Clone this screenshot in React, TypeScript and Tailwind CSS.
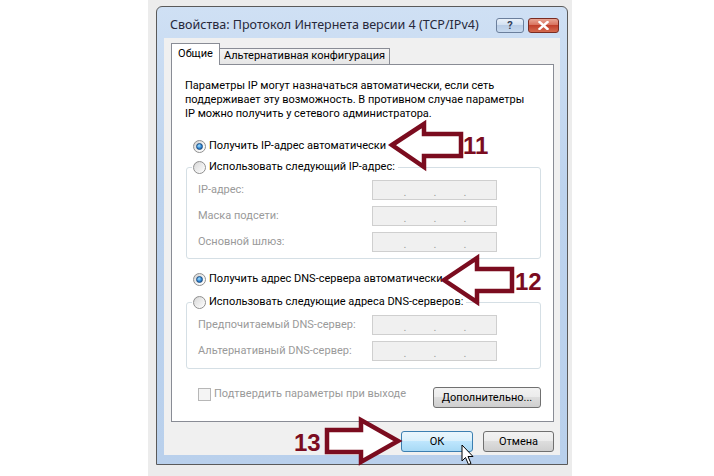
import React from 'react';

const FONT = "font-['Roboto','Noto_Sans',sans-serif]";

function Radio({ checked }: { checked?: boolean }) {
  return (
    <span className="inline-flex w-[13px] h-[13px] shrink-0 items-center justify-center rounded-full border border-[#8f8f8f] bg-[linear-gradient(135deg,#cfcfcf,#f6f6f6_60%,#ffffff)]">
      {checked ? (
        <span className="w-[7px] h-[7px] rounded-full border border-[#1b4c80] bg-[radial-gradient(circle_at_40%_35%,#a8e4ff,#2f86d6_55%,#17508f)]" />
      ) : (
        <span className="w-[9px] h-[9px] rounded-full bg-[linear-gradient(135deg,#dcdcdc,#fafafa)]" />
      )}
    </span>
  );
}

function IpBox() {
  return (
    <div className="w-[125px] h-[20px] shrink-0 border border-[#cfcfcf] bg-[#f0f0f0] flex items-center pl-[30px] gap-[26px] text-[11px] text-[#9a9a9a] leading-none pt-[5px]">
      <span className="w-[4px] text-center">.</span>
      <span className="w-[4px] text-center">.</span>
      <span className="w-[4px] text-center">.</span>
    </div>
  );
}

function Field({ label }: { label: string }) {
  return (
    <div className="flex items-center h-[20px]">
      <span className="w-[174px] shrink-0 whitespace-nowrap text-[#9a9a9a]">{label}</span>
      <IpBox />
    </div>
  );
}

const btn = 'h-[21px] rounded-[3px] border text-black leading-none whitespace-nowrap';
const greyBtn = 'border-[#707070] bg-[linear-gradient(#f2f2f2,#ebebeb_49%,#dddddd_50%,#cfcfcf)]';
const blueBtn = 'border-[#3c7fb1] bg-[linear-gradient(#eaf6fd,#d9f0fc_49%,#bee6fd_50%,#a7d9f5)]';

export default function App() {
  return (
    <div className={`relative w-[714px] h-[476px] bg-white overflow-hidden text-[11px] ${FONT}`}>
      <div className="ml-[148px] w-[424px] h-[476px] bg-[#ececec] pt-[6px] pl-[8px]">
        {/* window */}
        <div className="w-[412px] h-[459px] border border-[#5a5a5a] rounded-t-[6px] bg-[linear-gradient(#cfe0f4,#bdd3ee_40%,#b9d0ec)] flex flex-col">
          {/* title bar */}
          <div className="h-[31px] pl-[13px] pr-[8px] pt-[5px] flex items-center justify-between">
            <span className="font-['Noto_Sans',sans-serif] text-[12.5px] text-[#27283a] leading-[16px] whitespace-nowrap">Свойства: Протокол Интернета версии 4 (TCP/IPv4)</span>
            <div className="flex gap-[4px]">
              <div className="w-[28px] h-[15px] rounded-[3px] border border-[#6b7f9c] bg-[linear-gradient(#e9f1fa,#d3e1f2_45%,#b9cde6_50%,#c8daef)] flex items-center justify-center text-[11px] font-bold text-[#33415a] leading-none">?</div>
              <div className="w-[31px] h-[15px] rounded-[3px] border border-[#7a2c22] bg-[linear-gradient(#e9a594,#d9735f_45%,#c2402c_50%,#d46a4f)] flex items-center justify-center">
                <svg width="11" height="9" viewBox="0 0 11 9">
                  <path d="M1.5 1 L9.5 8 M9.5 1 L1.5 8" stroke="#ffffff" strokeWidth="2.4" strokeLinecap="square" />
                </svg>
              </div>
            </div>
          </div>

          {/* client area */}
          <div className="mx-[7px] h-[417px] bg-[#f0f0f0] pl-[7px] pt-[5px] text-black">
            {/* tabs */}
            <div className="flex items-start h-[21px]">
              <div className="relative z-10 w-[49px] h-[22px] border border-b-0 border-[#898c95] bg-white flex items-center justify-center pb-[1px] whitespace-nowrap">
                Общие
              </div>
              <div className="mt-[5px] w-[170px] h-[16px] border-t border-r border-[#898c95] bg-[linear-gradient(#f4f4f4,#e6e6e6)] flex items-center justify-center whitespace-nowrap">
                Альтернативная конфигурация
              </div>
            </div>

            {/* panel */}
            <div className="w-[383px] h-[358px] border border-[#898c95] bg-white">
              <div className="ml-[13px] mt-[14px] leading-[14px] whitespace-nowrap">
                <div>Параметры IP могут назначаться автоматически, если сеть</div>
                <div>поддерживает эту возможность. В противном случае параметры</div>
                <div>IP можно получить у сетевого администратора.</div>
              </div>

              <div className="mt-[17px] ml-[21px] h-[16px] flex items-center gap-[3px] whitespace-nowrap">
                <Radio checked />
                <span>Получить IP-адрес автоматически</span>
              </div>

              <fieldset className="mt-[5px] ml-[14px] w-[355px] border border-[#d5dfe5] rounded-[3px] pb-[6px]">
                <legend className="ml-[5px] px-[1px] h-[16px] flex items-center gap-[3px] whitespace-nowrap">
                  <Radio />
                  <span className="pr-[2px]">Использовать следующий IP-адрес:</span>
                </legend>
                <div className="mt-[5px] pl-[11px] flex flex-col gap-[6px]">
                  <Field label="IP-адрес:" />
                  <Field label="Маска подсети:" />
                  <Field label="Основной шлюз:" />
                </div>
              </fieldset>

              <div className="mt-[12px] ml-[21px] h-[16px] flex items-center gap-[3px] whitespace-nowrap">
                <Radio checked />
                <span>Получить адрес DNS-сервера автоматически</span>
              </div>

              <fieldset className="mt-[7px] ml-[14px] w-[355px] border border-[#d5dfe5] rounded-[3px] pb-[7px]">
                <legend className="ml-[5px] px-[1px] h-[16px] flex items-center gap-[3px] whitespace-nowrap">
                  <Radio />
                  <span className="pr-[2px]">Использовать следующие адреса DNS-серверов:</span>
                </legend>
                <div className="mt-[5px] pl-[11px] flex flex-col gap-[6px]">
                  <Field label="Предпочитаемый DNS-сервер:" />
                  <Field label="Альтернативный DNS-сервер:" />
                </div>
              </fieldset>

              <div className="mt-[18px] ml-[26px] mr-[12px] flex items-start justify-between">
                <div className="flex items-center gap-[3px] h-[13px] mt-[1px] whitespace-nowrap">
                  <span className="w-[13px] h-[13px] border border-[#b7b7b7] bg-[#f4f4f4]" />
                  <span className="text-[#9a9a9a]">Подтвердить параметры при выходе</span>
                </div>
                <button className={`${btn} ${greyBtn} w-[108px]`}>Дополнительно...</button>
              </div>
            </div>

            {/* bottom buttons */}
            <div className="mt-[9px] w-[383px] flex justify-end gap-[10px]">
              <button className={`${btn} ${blueBtn} w-[72px]`}>ОК</button>
              <button className={`${btn} ${greyBtn} w-[71px]`}>Отмена</button>
            </div>
          </div>
        </div>
      </div>

      {/* annotation arrows */}
      <svg className="absolute left-0 top-0 pointer-events-none" width="714" height="476" viewBox="0 0 714 476">
        <g fill="#ffffff" stroke="#7b0c1f" strokeWidth="4.5" strokeLinejoin="miter">
          <polygon points="392,145 424,124 424,134 461,134 461,156 424,156 424,167" />
          <polygon points="444,280 477,258 477,269 512,269 512,291 477,291 477,302" />
          <polygon points="398,441 361,420 361,430 327,430 327,452 361,452 361,462" />
        </g>
        <g fill="#7b0c1f" fontFamily="Liberation Sans, Arial, sans-serif" fontWeight="700" fontSize="24">
          <text x="463" y="154">11</text>
          <text x="515" y="290">12</text>
          <text x="294" y="451">13</text>
        </g>
        <path
          d="M462 445 L462 461 L465.5 457.5 L468.5 464.5 L471 463.5 L468 456.5 L473 456.5 Z"
          fill="#ffffff"
          stroke="#000000"
          strokeWidth="1"
          strokeLinejoin="round"
        />
      </svg>
    </div>
  );
}
